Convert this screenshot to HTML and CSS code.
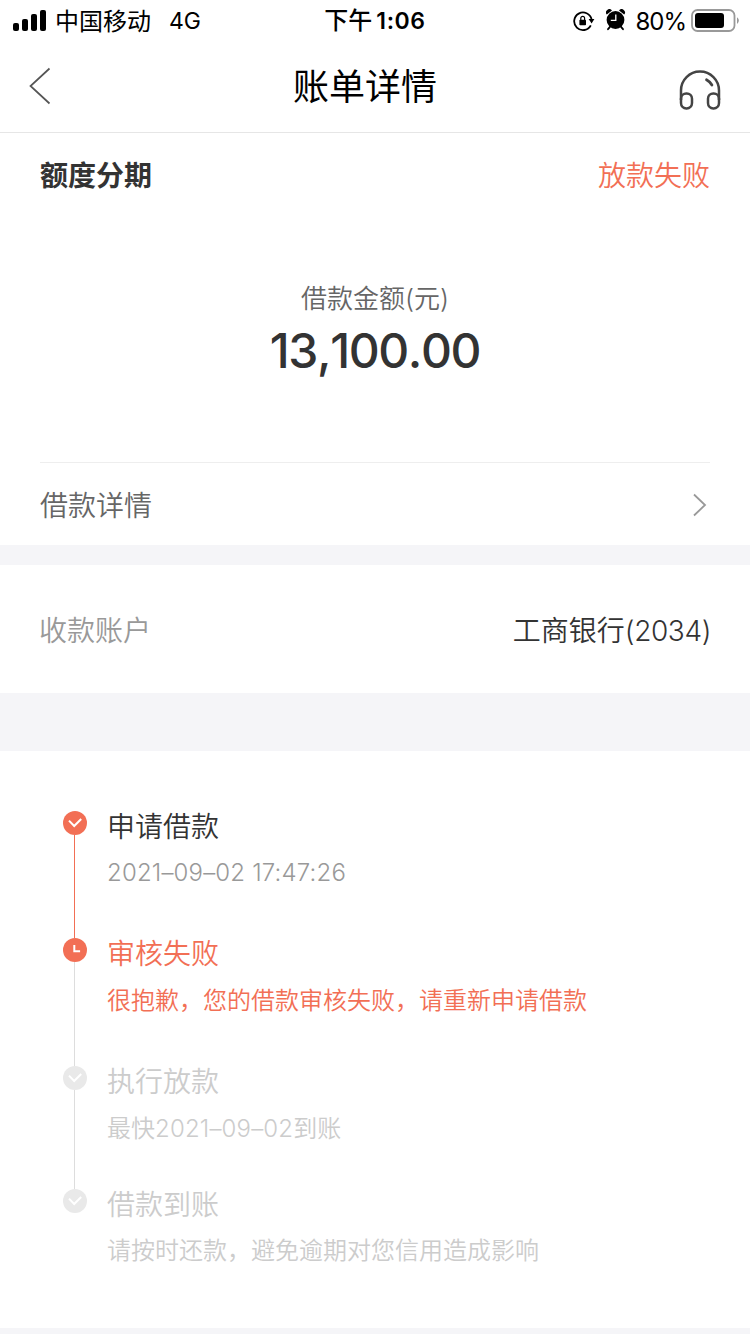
FILE: index.html
```
<!DOCTYPE html>
<html lang="zh-CN">
<head>
    <meta charset="UTF-8">
    <meta name="viewport" content="width=device-width, initial-scale=1.0">
    <title>账单详情</title>
    <link rel="stylesheet" href="styles.css">
</head>
<body>
    <div class="status-bar">
        <div class="status-left">
            <svg class="signal" width="34" height="22" viewBox="0 0 34 22">
                <rect x="0" y="13" width="6" height="8" rx="2"/>
                <rect x="9" y="9" width="6" height="12" rx="2"/>
                <rect x="18" y="4" width="6" height="17" rx="2"/>
                <rect x="27" y="0" width="6" height="21" rx="2"/>
            </svg>
            <span class="carrier">中国移动</span>
            <span class="network">4G</span>
        </div>
        <div class="status-time">下午<b>1:06</b></div>
        <div class="status-right">
            <svg class="rotation-lock" width="22" height="22" viewBox="0 0 22 22">
                <path d="M17.8 15.4A8.8 8.8 0 1 1 18.6 9.4" fill="none" stroke="#000" stroke-width="1.8"/>
                <path d="M15.6 9h5.8l-2.8 4.6z"/>
                <rect x="6.4" y="9.8" width="6.6" height="5.4" rx="0.8"/>
                <path d="M7.8 10V8.3a1.9 1.9 0 0 1 3.8 0V10" fill="none" stroke="#000" stroke-width="1.2"/>
            </svg>
            <svg class="alarm" width="20" height="22" viewBox="0 0 20 22">
                <path d="M0.8 5.6a3 3 0 0 1 5.2-4.2zM18.2 5.6a3 3 0 0 0-5.2-4.2z"/>
                <circle cx="9.5" cy="11" r="8.9"/>
                <path d="M4 17.8l-2 2.4M15 17.8l2 2.4" stroke="#000" stroke-width="1.8" stroke-linecap="round"/>
                <path d="M9.8 5.4v6H4.8" fill="none" stroke="#fff" stroke-width="1.3"/>
            </svg>
            <span class="percent">80%</span>
            <svg class="battery" width="48" height="24" viewBox="0 0 48 24">
                <rect x="1" y="1" width="42.5" height="21" rx="5.5" fill="none" stroke="#999" stroke-width="1.8"/>
                <rect x="4" y="4" width="29" height="15" rx="3"/>
                <path d="M46 8.2c2.4 1.4 2.4 5.2 0 6.6z" fill="#999"/>
            </svg>
        </div>
    </div>

    <div class="header">
        <svg class="back" width="22" height="38" viewBox="0 0 22 38">
            <path d="M20.5 1.5L1.5 19l19 17.5" fill="none" stroke="#555" stroke-width="1.7"/>
        </svg>
        <h1>账单详情</h1>
        <svg class="service" width="42" height="40" viewBox="0 0 42 40" fill="none" stroke="#444" stroke-width="2.5">
            <path d="M2 30V20.5a19 19 0 0 1 38 0V30"/>
            <rect x="2" y="23.4" width="11" height="15" rx="5.3"/>
            <rect x="29" y="23.4" width="11" height="15" rx="5.3"/>
            <path d="M27.5 9.8q3.4 1.8 5.4 5.2" stroke-width="2.8" stroke-linecap="round"/>
        </svg>
    </div>

    <div class="card summary">
        <div class="row product">
            <h2>额度分期</h2>
            <span class="state">放款失败</span>
        </div>
        <div class="amount-box">
            <div class="amount-label">借款金额(元)</div>
            <div class="amount">13,100.00</div>
        </div>
        <div class="row detail">
            <span>借款详情</span>
            <svg class="arrow" width="14" height="24" viewBox="0 0 14 24">
                <path d="M1 1.5L12 12 1 22.5" fill="none" stroke="#999" stroke-width="1.8"/>
            </svg>
        </div>
    </div>

    <div class="card row account">
        <span class="account-label">收款账户</span>
        <span class="account-name">工商银行<span class="num">(2034)</span></span>
    </div>

    <div class="card timeline">
        <div class="step done">
            <div class="rail">
                <svg class="dot" width="24" height="24" viewBox="0 0 24 24">
                    <circle cx="12" cy="12" r="12"/>
                    <path d="M6 9.6l5.2 5.4 7-7"/>
                </svg>
            </div>
            <div class="step-body">
                <div class="step-title">申请借款</div>
                <div class="step-text date">2021–09–02 17:47:26</div>
            </div>
        </div>
        <div class="step failed">
            <div class="rail">
                <svg class="dot" width="24" height="24" viewBox="0 0 24 24">
                    <circle cx="12" cy="12" r="12"/>
                    <path d="M11.3 7v6.2h5.8"/>
                </svg>
            </div>
            <div class="step-body">
                <div class="step-title">审核失败</div>
                <div class="step-text">很抱歉，您的借款审核失败，请重新申请借款</div>
            </div>
        </div>
        <div class="step third">
            <div class="rail">
                <svg class="dot" width="24" height="24" viewBox="0 0 24 24">
                    <circle cx="12" cy="12" r="12"/>
                    <path d="M6 9.6l5.2 5.4 7-7"/>
                </svg>
            </div>
            <div class="step-body">
                <div class="step-title">执行放款</div>
                <div class="step-text">最快<span class="date">2021–09–02</span>到账</div>
            </div>
        </div>
        <div class="step last">
            <div class="rail">
                <svg class="dot" width="24" height="24" viewBox="0 0 24 24">
                    <circle cx="12" cy="12" r="12"/>
                    <path d="M6 9.6l5.2 5.4 7-7"/>
                </svg>
            </div>
            <div class="step-body">
                <div class="step-title">借款到账</div>
                <div class="step-text">请按时还款，避免逾期对您信用造成影响</div>
            </div>
        </div>
    </div>
</body>
</html>
```
FILE: styles.css
```
* {
    box-sizing: border-box;
}

body {
    margin: 0;
    height: 1334px;
    overflow: hidden;
    background-color: #f5f5f8;
    color: #333;
    font-family: Inter, "Noto Sans CJK SC", sans-serif;
    font-size: 28px;
    font-weight: 350;
}

h1, h2 {
    margin: 0;
}

svg {
    display: block;
    flex-shrink: 0;
}

.status-bar {
    display: grid;
    grid-template-columns: 1fr auto 1fr;
    align-items: center;
    height: 40px;
    padding: 1px 11px 0 13px;
    background-color: #fff;
    color: #000;
    font-size: 24px;
    font-weight: 400;
    line-height: 39px;
}

.status-left, .status-right {
    display: flex;
    align-items: center;
}

.status-right {
    justify-content: flex-end;
}

.signal {
    margin-bottom: 1px;
}

.carrier {
    margin-left: 8px;
}

.network {
    margin-left: 18px;
    font-size: 23px;
}

.status-time {
    margin-right: 2px;
    font-weight: 500;
}

.status-time b {
    margin-left: 4px;
    font-size: 23px;
    font-weight: 600;
    letter-spacing: 0.6px;
}

.rotation-lock {
    margin-bottom: 1px;
}

.alarm {
    margin: 0 9px 2px 11px;
}

.percent {
    margin-right: 5px;
    font-size: 24px;
    letter-spacing: -1px;
}

.battery {
    margin-bottom: 1px;
}

.header {
    display: flex;
    align-items: center;
    justify-content: space-between;
    height: 93px;
    padding: 0 29px;
    background-color: #fff;
    border-bottom: 1px solid #e6e6e6;
}

.header h1 {
    padding-top: 3px;
    color: #000;
    font-size: 36px;
    font-weight: 400;
    line-height: 89px;
}

.service {
    margin-top: 8px;
}

.card {
    background-color: #fff;
}

.row {
    display: flex;
    align-items: center;
    justify-content: space-between;
}

.summary {
    height: 412px;
    padding: 0 40px;
}

.product {
    height: 82px;
}

.product h2 {
    font-size: 28px;
    font-weight: 600;
}

.state {
    color: #f26f55;
}

.amount-box {
    height: 248px;
    padding-top: 64px;
    text-align: center;
    border-bottom: 1px solid #eee;
}

.amount-label {
    color: #666;
    font-size: 26px;
    line-height: 40px;
}

.amount {
    font-size: 48px;
    font-weight: 550;
    font-kerning: none;
    letter-spacing: -1.4px;
    line-height: 64px;
}

.detail {
    height: 82px;
    color: #666;
}

.arrow {
    margin: 2px 3px 0 0;
}

.account {
    height: 128px;
    margin-top: 20px;
    padding: 0 39px 0 39px;
}

.account-label {
    color: #999;
}

.num {
    letter-spacing: -0.4px;
}

.timeline {
    height: 577px;
    margin-top: 58px;
    padding: 60px 40px 0 63px;
}

.step {
    display: flex;
    height: 127px;
    color: #ccc;
}

.step.failed {
    height: 128px;
}

.step.third {
    height: 123px;
}

.rail {
    display: flex;
    flex-direction: column;
    align-items: center;
    width: 24px;
    margin-right: 20px;
}

.rail::after {
    content: "";
    flex: 1;
    width: 1px;
    margin-right: 1px;
    background-color: #ddd;
}

.done .rail::after {
    background-color: #f26f55;
}

.last .rail::after {
    display: none;
}

.dot {
    fill: #e9e9e9;
}

.dot path {
    fill: none;
    stroke: #fff;
    stroke-width: 2;
}

.done .dot, .failed .dot {
    fill: #f26f55;
}

.step-title {
    padding-top: 1px;
    line-height: 30px;
}

.step-text {
    margin-top: 15px;
    font-size: 24px;
    line-height: 32px;
}

.date {
    letter-spacing: 0.17px;
}

.done .step-title {
    color: #333;
}

.done .step-text {
    color: #999;
}

.failed .step-title, .failed .step-text {
    color: #f26f55;
}

.failed .step-text, .third .step-text {
    margin-top: 16px;
}
```
